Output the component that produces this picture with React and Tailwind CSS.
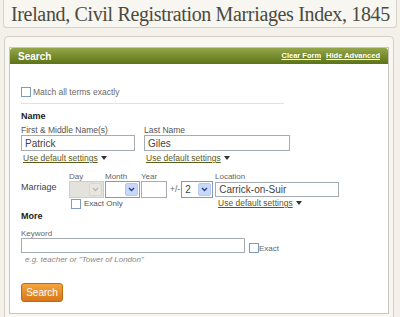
import React from 'react';

function Arrow({ disabled }) {
    return (
        <span
            className={
                'flex h-[13px] w-[13px] items-center justify-center rounded-[2px] border ' +
                (disabled ? 'border-[#d8d6d0] bg-[#e8e6e0]' : 'border-[#b8c8f0] bg-[#c8d8fa]')
            }
        >
            <svg width="7" height="5" viewBox="0 0 7 5">
                <path d="M1 1 L3.5 3.5 L6 1" fill="none" stroke={disabled ? '#b8b6b0' : '#2a3f8c'} strokeWidth="1.4" />
            </svg>
        </span>
    );
}

function Select({ width, value, disabled }) {
    return (
        <div
            className={
                'flex h-[17px] items-center justify-between border pl-[3px] pr-[1px] ' +
                (disabled ? 'border-[#cfcdc6] bg-[#e4e2dc]' : 'border-[#7f9db9] bg-white')
            }
            style={{ width }}
        >
            <span className="text-[10px] text-[#444]">{value}</span>
            <Arrow disabled={disabled} />
        </div>
    );
}

function Checkbox() {
    return <span className="inline-block h-[10px] w-[10px] border border-[#7f9db9] bg-white" />;
}

function DefaultLink() {
    return (
        <span className="flex h-[10px] items-center gap-[3px] text-[8.5px] leading-[10px] text-[#5b5a1c]">
            <span className="underline">Use default settings</span>
            <svg width="6" height="4" viewBox="0 0 6 4">
                <path d="M0 0 H6 L3 4 Z" fill="#333" />
            </svg>
        </span>
    );
}

export default function App() {
    return (
        <div className="h-[317px] w-[400px] overflow-hidden bg-[#f3f1ea] font-['Liberation_Sans',Arial,sans-serif]">
            {/* Título */}
            <div className="mx-[3px] flex h-[28px] items-center rounded-b-[4px] border border-t-0 border-[#d6d3c8] bg-[#f7f6f1] pl-[7px]">
                <h1 className="whitespace-nowrap font-['Liberation_Serif',serif] text-[20px] leading-none tracking-[-0.35px] text-[#4c4a3e]">
                    Ireland, Civil Registration Marriages Index, 1845
                </h1>
            </div>

            {/* Panel */}
            <div className="ml-[4px] mt-[8px] h-[300px] w-[390px] rounded-t-[4px] border border-[#d2cfc4] bg-[#f8f7f2] px-[4px] pt-[10px]">
                <div className="h-[267px] w-[380px] border border-[#c9c7bd] bg-white">
                    <div className="flex h-[16px] items-center justify-between rounded-t-[3px] bg-gradient-to-b from-[#95a648] to-[#5c7414] px-[8px]">
                        <span className="text-[10px] font-bold text-white">Search</span>
                        <div className="flex gap-[5px] text-[7.5px] font-bold text-white">
                            <span className="underline">Clear Form</span>
                            <span className="underline">Hide Advanced</span>
                        </div>
                    </div>

                    <div className="pl-[11px]">
                        <div className="mt-[22px] flex h-[12px] items-center gap-[2px]">
                            <Checkbox />
                            <span className="text-[8.5px] text-[#6a6a6a]">Match all terms exactly</span>
                        </div>
                        <div className="mt-[5px] h-px w-[263px] bg-[#e4e2dc]" />

                        <div className="mt-[7px] text-[9px] font-bold leading-[11px] text-[#222]">Name</div>
                        <div className="mt-[4px] flex gap-[9px]">
                            <div className="w-[114px]">
                                <div className="text-[8.5px] leading-[9px] text-[#555]">First &amp; Middle Name(s)</div>
                                <div className="flex h-[16px] items-center border border-[#a5acb2] px-[3px] text-[10px] text-[#444]">Patrick</div>
                                <div className="ml-[2px] mt-[2px]"><DefaultLink /></div>
                            </div>
                            <div className="w-[146px]">
                                <div className="text-[8.5px] leading-[9px] text-[#555]">Last Name</div>
                                <div className="flex h-[16px] items-center border border-[#a5acb2] px-[3px] text-[10px] text-[#444]">Giles</div>
                                <div className="ml-[2px] mt-[2px]"><DefaultLink /></div>
                            </div>
                        </div>

                        <div className="mt-[9px] flex">
                            <div className="w-[48px] pt-[10px] text-[9px] leading-[10px] text-[#444]">Marriage</div>
                            <div>
                                <div className="flex h-[9px] text-[8px] leading-[9px] text-[#666]">
                                    <span className="w-[36px]">Day</span>
                                    <span className="w-[36px]">Month</span>
                                    <span className="w-[74px]">Year</span>
                                    <span>Location</span>
                                </div>
                                <div className="flex items-center">
                                    <Select width={35} value="" disabled />
                                    <div className="ml-[1px]"><Select width={35} value="" /></div>
                                    <div className="ml-[1px] h-[17px] w-[26px] border border-[#a5acb2] bg-white" />
                                    <span className="ml-[3px] text-[8.5px] text-[#666]">+/-</span>
                                    <div className="ml-[1px]"><Select width={32} value="2" /></div>
                                    <div className="ml-[2px] flex h-[15px] w-[124px] items-center border border-[#a5acb2] px-[3px] text-[10px] text-[#444]">Carrick-on-Suir</div>
                                </div>
                                <div className="flex">
                                    <div className="ml-[2px] mt-[1px] flex h-[10px] w-[144px] items-center gap-[3px]">
                                        <Checkbox />
                                        <span className="text-[8px] text-[#555]">Exact Only</span>
                                    </div>
                                    <div className="ml-[3px]"><DefaultLink /></div>
                                </div>
                            </div>
                        </div>

                        <div className="mt-[2px] text-[9px] font-bold leading-[10px] text-[#222]">More</div>
                        <div className="mt-[8px] text-[8px] leading-[9px] text-[#666]">Keyword</div>
                        <div className="flex items-end gap-[4px]">
                            <div className="h-[15px] w-[224px] border border-[#a5acb2] bg-white" />
                            <div className="flex items-end">
                                <Checkbox />
                                <span className="text-[8px] leading-[8px] text-[#666]">Exact</span>
                            </div>
                        </div>
                        <div className="ml-[4px] mt-[2px] text-[8px] italic leading-[10px] text-[#888]">e.g. teacher or "Tower of London"</div>

                        <button className="mt-[18px] flex h-[19px] w-[42px] items-center justify-center rounded-[3px] border border-[#c06a10] bg-gradient-to-b from-[#f4a53a] to-[#d8761a] text-[10px] text-white">
                            Search
                        </button>
                    </div>
                </div>
            </div>
        </div>
    );
}
